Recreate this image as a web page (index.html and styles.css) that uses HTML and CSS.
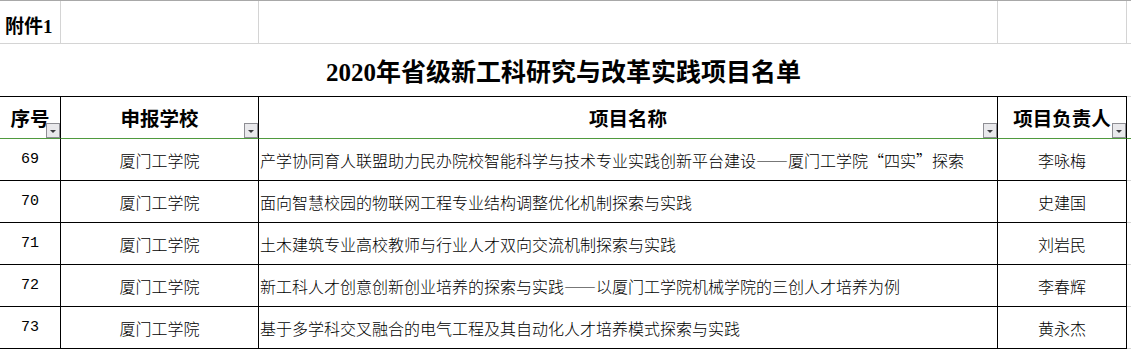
FILE: index.html
```html
<!DOCTYPE html>
<html lang="zh-CN">
<head>
<meta charset="utf-8">
<title>2020年省级新工科研究与改革实践项目名单</title>
<link rel="stylesheet" href="styles.css">
</head>
<body>
<div class="sheet">
  <div class="cell top first label">附件1</div>
  <div class="cell top"></div>
  <div class="cell top"></div>
  <div class="cell top"></div>
  <div class="cell top extra"></div>

  <div class="cell title">2020年省级新工科研究与改革实践项目名单</div>
  <div class="cell title-extra"></div>

  <div class="cell head c">序号<span class="dd"><svg width="14" height="15" viewBox="0 0 14 15"><rect x="0.5" y="0.5" width="13" height="14" fill="#e9e9ec" stroke="#8e8e94"/><path d="M4 7 L10 7 L7 10 Z" fill="#3c3c40"/></svg></span></div>
  <div class="cell head c">申报学校<span class="dd"><svg width="14" height="15" viewBox="0 0 14 15"><rect x="0.5" y="0.5" width="13" height="14" fill="#e9e9ec" stroke="#8e8e94"/><path d="M4 7 L10 7 L7 10 Z" fill="#3c3c40"/></svg></span></div>
  <div class="cell head c">项目名称<span class="dd"><svg width="14" height="15" viewBox="0 0 14 15"><rect x="0.5" y="0.5" width="13" height="14" fill="#e9e9ec" stroke="#8e8e94"/><path d="M4 7 L10 7 L7 10 Z" fill="#3c3c40"/></svg></span></div>
  <div class="cell head c">项目负责人<span class="dd"><svg width="14" height="15" viewBox="0 0 14 15"><rect x="0.5" y="0.5" width="13" height="14" fill="#e9e9ec" stroke="#8e8e94"/><path d="M4 7 L10 7 L7 10 Z" fill="#3c3c40"/></svg></span></div>
  <div class="cell extra-row green"></div>

  <div class="cell body c num">69</div>
  <div class="cell body c">厦门工学院</div>
  <div class="cell body l">产学协同育人联盟助力民办院校智能科学与技术专业实践创新平台建设——厦门工学院“四实”探索</div>
  <div class="cell body c">李咏梅</div>
  <div class="cell extra-row"></div>

  <div class="cell body c num">70</div>
  <div class="cell body c">厦门工学院</div>
  <div class="cell body l">面向智慧校园的物联网工程专业结构调整优化机制探索与实践</div>
  <div class="cell body c">史建国</div>
  <div class="cell extra-row"></div>

  <div class="cell body c num">71</div>
  <div class="cell body c">厦门工学院</div>
  <div class="cell body l">土木建筑专业高校教师与行业人才双向交流机制探索与实践</div>
  <div class="cell body c">刘岩民</div>
  <div class="cell extra-row"></div>

  <div class="cell body c num">72</div>
  <div class="cell body c">厦门工学院</div>
  <div class="cell body l">新工科人才创意创新创业培养的探索与实践——以厦门工学院机械学院的三创人才培养为例</div>
  <div class="cell body c">李春辉</div>
  <div class="cell extra-row"></div>

  <div class="cell body c num">73</div>
  <div class="cell body c">厦门工学院</div>
  <div class="cell body l">基于多学科交叉融合的电气工程及其自动化人才培养模式探索与实践</div>
  <div class="cell body c">黄永杰</div>
  <div class="cell extra-row"></div>
</div>
</body>
</html>
```

FILE: styles.css
```css
* {
  box-sizing: border-box;
}

html, body {
  margin: 0;
  padding: 0;
  background: #ffffff;
  overflow: hidden;
}

body {
  font-family: "Noto Sans CJK SC", "Noto Sans", sans-serif;
  color: #000000;
}

.sheet {
  display: grid;
  grid-template-columns: 61px 198px 739px 129px 1fr;
  grid-template-rows: 44px 52px 42px repeat(5, 42px);
  width: 1131px;
  border-top: 1px solid #a8a8a8;
}

.cell {
  display: flex;
  align-items: center;
  position: relative;
  white-space: nowrap;
  overflow: hidden;
}

.top {
  height: 43px;
  border-right: 1px solid #d4d4d4;
  border-bottom: 1px solid #d4d4d4;
}

.top.extra {
  border-right: none;
}

.label {
  font-weight: 700;
  font-size: 19px;
  padding: 4px 0 0 5px;
  font-family: "Liberation Serif", "Noto Sans CJK SC", serif;
}

.title {
  grid-column: 1 / 5;
  justify-content: center;
  font-family: "Liberation Serif", "Noto Sans CJK SC", serif;
  font-weight: 700;
  font-size: 25px;
  border-bottom: 1px solid #000000;
  padding-bottom: 2px;
}

.title-extra {
  border-bottom: 1px solid #d4d4d4;
}

.head {
  font-weight: 700;
  font-size: 19.5px;
  border-right: 1px solid #000000;
  border-bottom: 1px solid #4f9a3e;
}

.extra-row {
  border-bottom: 1px solid #d4d4d4;
}

.extra-row.green {
  border-bottom: 1px solid #4f9a3e;
}

.body {
  font-size: 16px;
  font-weight: 300;
  border-right: 1px solid #000000;
  border-bottom: 1px solid #000000;
}

.c {
  justify-content: center;
}

.l {
  justify-content: flex-start;
  padding-left: 1px;
}

.num {
  font-family: "Liberation Mono", monospace;
  font-size: 15px;
  font-weight: 400;
}

.dd {
  position: absolute;
  right: 0;
  bottom: 0;
  width: 14px;
  height: 15px;
  display: block;
  line-height: 0;
}
```
